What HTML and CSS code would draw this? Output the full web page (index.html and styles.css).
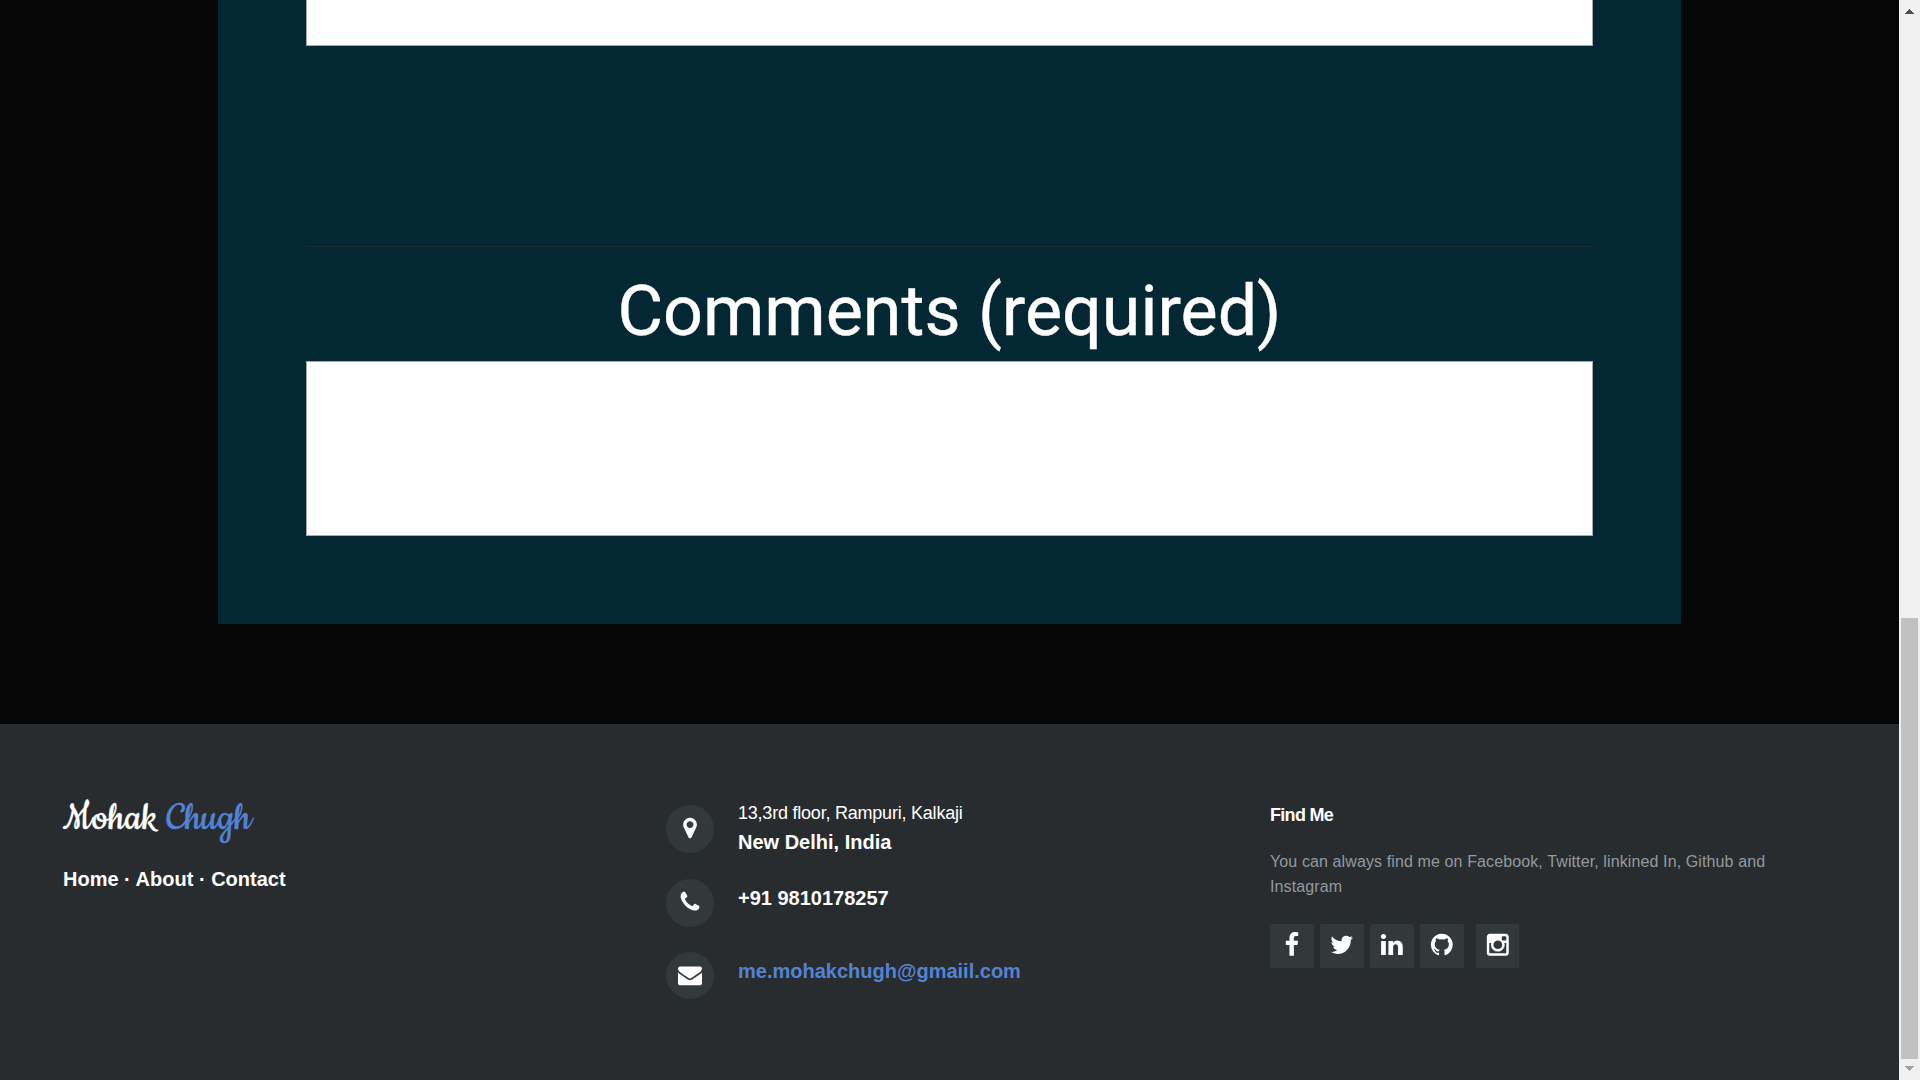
FILE: index.html
```html
<!DOCTYPE html>
<html lang="en">
<head>
<meta charset="utf-8">
<title>Mohak Chugh</title>
<link rel="stylesheet" href="styles.css">
</head>
<body>
<div class="page">
  <main class="content">
    <form class="panel">
      <div class="field field-first"></div>
      <hr class="divider">
      <label class="label">Comments (required)</label>
      <div class="field field-comments"></div>
    </form>
  </main>
  <footer class="footer">
    <section class="brand">
      <h3 class="logo">Mohak <span>Chugh</span></h3>
      <p class="links">Home · About · Contact</p>
    </section>
    <section class="contacts">
      <div class="contact">
        <i class="circle"><svg class="glyph" viewBox="0 0 1792 1792"><path d="M1152 640q0-106-75-181t-181-75-181 75-75 181 75 181 181 75 181-75 75-181zm256 0q0 109-33 179l-364 774q-16 33-47.5 52t-67.5 19-67.5-19-46.5-52l-365-774q-33-70-33-179 0-212 150-362t362-150 362 150 150 362z"/></svg></i>
        <p class="address"><span>13,3rd floor, Rampuri, Kalkaji</span>New Delhi, India</p>
      </div>
      <div class="contact">
        <i class="circle"><svg class="glyph" viewBox="0 0 1792 1792"><path d="M1600 1240q0 27-10 70.5t-21 68.5q-21 50-122 106-94 51-186 51-27 0-53-3.5t-57.5-12.5-47-14.5-55.5-20.5-49-18q-98-35-175-83-127-79-264-216t-216-264q-48-77-83-175-3-9-18-49t-20.5-55.5-14.5-47-12.5-57.5-3.5-53q0-92 51-186 56-101 106-122 25-11 68.5-21t70.5-10q14 0 21 3 18 6 53 76 11 19 30 54t35 63.5 31 53.5q3 4 17.5 25t21.5 35.5 7 28.5q0 20-28.5 50t-62 55-62 53-28.5 46q0 9 5 22.5t8.5 20.5 14 24 11.5 19q76 137 174 235t235 174q2 1 19 11.5t24 14 20.5 8.5 22.5 5q18 0 46-28.5t53-62 55-62 50-28.5q14 0 28.5 7t35.5 21.5 25 17.5q25 15 53.5 31t63.5 35 54 30q70 35 76 53 3 7 3 21z"/></svg></i>
        <p class="phone">+91 9810178257</p>
      </div>
      <div class="contact">
        <i class="circle circle-mail"><svg class="glyph" viewBox="0 0 1792 1792"><path d="M1792 710v794q0 66-47 113t-113 47h-1472q-66 0-113-47t-47-113v-794q44 49 101 87 362 246 497 345 57 42 92.5 65.5t94.5 48 110 24.5h2q51 0 110-24.5t94.5-48 92.5-65.5q170-123 498-345 57-39 100-87zm0-294q0 79-49 151t-122 123q-376 261-468 325-10 7-42.5 31t-54 38.5-52 32.5-57.5 27-50 9h-2q-23 0-50-9t-57.5-27-52-32.5-54-38.5-42.5-31q-91-64-262-182.5t-205-142.5q-62-42-117-115.5t-55-136.5q0-78 41.5-130t118.5-52h1472q65 0 112.5 47t47.5 113z"/></svg></i>
        <p class="mail">me.mohakchugh@gmaiil.com</p>
      </div>
    </section>
    <section class="find">
      <h4 class="find-title">Find Me</h4>
      <p class="find-text">You can always find me on Facebook, Twitter, linkined In, Github and Instagram</p>
      <div class="socials">
        <a class="social"><svg class="glyph" viewBox="0 0 1792 1792"><path d="M1343 12v264h-157q-86 0-116 36t-30 108v189h293l-39 296h-254v759h-306v-759h-255v-296h255v-218q0-186 104-288.5t277-102.5q147 0 228 12z"/></svg></a>
        <a class="social"><svg class="glyph" viewBox="0 0 1792 1792"><path d="M1684 408q-67 98-162 167 1 14 1 42 0 130-38 259.5t-115.5 248.5-184.5 210.5-258 146-323 54.5q-271 0-496-145 35 4 78 4 225 0 401-138-105-2-188-64.5t-114-159.5q33 5 61 5 43 0 85-11-112-23-185.5-111.5t-73.5-205.5v-4q68 38 146 41-66-44-105-115t-39-154q0-88 44-163 121 149 294.5 238.5t371.5 99.5q-8-38-8-74 0-134 94.5-228.5t228.5-94.5q140 0 236 102 109-21 205-78-37 115-142 178 93-10 186-50z"/></svg></a>
        <a class="social"><svg class="glyph" viewBox="0 0 1792 1792"><path d="M477 625v991h-330v-991h330zm21-306q1 73-50.5 122t-135.5 49h-2q-82 0-132-49t-50-122q0-74 51.5-122.5t134.5-48.5 133 48.5 51 122.5zm1166 729v568h-329v-530q0-105-40.5-164.5t-126.5-59.5q-63 0-105.5 34.5t-63.5 85.5q-11 30-11 81v553h-329q2-399 2-647t-1-296l-1-48h329v144h-2q20-32 41-56t56.5-52 87-43.5 114.5-15.5q171 0 275 113.5t104 332.5z"/></svg></a>
        <a class="social"><svg class="glyph" viewBox="0 0 1792 1792"><path d="M896 128q209 0 385.5 103t279.5 279.5 103 385.5q0 251-146.5 451.5t-378.5 277.5q-27 5-40-7t-13-30q0-3 .5-76.5t.5-134.5q0-97-52-142 57-6 102.5-18t94-39 81-66.5 53-105 20.5-150.5q0-119-79-206 37-91-8-204-28-9-81 11t-92 44l-38 24q-93-26-192-26t-192 26q-16-11-42.5-27t-83.5-38.5-85-13.5q-45 113-8 204-79 87-79 206 0 85 20.5 150t52.5 105 80.5 67 94 39 102.5 18q-39 36-49 103-21 10-45 15t-57 5-65.5-21.5-55.5-62.5q-19-32-48.5-52t-49.5-24l-20-3q-21 0-29 4.5t-5 11.5 9 14 13 12l7 5q22 10 43.5 38t31.5 51l10 23q13 38 44 61.5t67 30 69.5 7 55.5-3.5l23-4q0 38 .5 88.5t.5 54.5q0 18-13 30t-40 7q-232-77-378.5-277.5t-146.5-451.5q0-209 103-385.5t279.5-279.5 385.5-103z"/></svg></a>
        <a class="social social-last"><svg class="glyph" viewBox="0 0 1792 1792"><path d="M1490 1426v-648h-135q20 63 20 131 0 126-64 232.5t-174 168.5-240 62q-197 0-337-135.5t-140-327.5q0-68 20-131h-141v648q0 26 17.5 43.5t43.5 17.5h1069q25 0 43-17.5t18-43.5zm-284-533q0-124-90.5-211.5t-218.5-87.5q-127 0-217.5 87.5t-90.5 211.5 90.5 211.5 217.5 87.5q128 0 218.5-87.5t90.5-211.5zm284-360v-165q0-28-20-48.5t-49-20.5h-174q-29 0-49 20.5t-20 48.5v165q0 29 20 49t49 20h174q29 0 49-20t20-49zm174-208v1142q0 81-58 139t-139 58h-1142q-81 0-139-58t-58-139v-1142q0-81 58-139t139-58h1142q81 0 139 58t58 139z"/></svg></a>
      </div>
    </section>
  </footer>
</div>
<aside class="scrollbar">
  <svg class="arrow" viewBox="0 0 9 5"><path d="M4 0h1v1h1v1h1v1h1v1h1v1H0V4h1V3h1V2h1V1h1z"/></svg>
  <div class="thumb"></div>
  <svg class="arrow arrow-down" viewBox="0 0 9 5"><path d="M0 0h9v1H8v1H7v1H6v1H5v1H4V4H3V3H2V2H1V1H0z"/></svg>
</aside>
</body>
</html>
```
FILE: styles.css
```css
* { box-sizing: border-box; }
body {
  margin: 0;
  height: 1080px;
  display: flex;
  overflow: hidden;
  background: #060606;
  color: #fff;
  font-family: "Liberation Sans", Arial, sans-serif;
}
h3, h4, p, hr { margin: 0; }
.page { width: 1899px; display: flex; flex-direction: column; }
.content { height: 724px; padding: 0 218px; }
.panel {
  height: 624px;
  padding: 0 88px;
  background: #042833;
  display: flex;
  flex-direction: column;
}
.field { background: #fff; border: 1px solid #a9a9a9; }
.field-first { height: 46px; border-top: 0; }
.field-comments { height: 175px; }
.divider { margin-top: 200px; height: 1px; border: 0; background: #222a31; }
.label {
  height: 114px;
  padding-top: 22px;
  font: 400 70px/84px Roboto, sans-serif;
  text-align: center;
  -webkit-text-stroke: 0.4px #fff;
}
.footer {
  flex: 1;
  background: #292c2f;
  display: grid;
  grid-template-columns: 603px 604px 1fr;
  padding: 70px 63px 0;
}
.logo {
  height: 60px;
  padding-top: 1px;
  font: 400 44.8px/48px Cookie, "Liberation Serif", cursive;
  white-space: nowrap;
  -webkit-text-stroke: 0.3px currentColor;
}
.logo span { color: #5383d3; }
.links { padding-top: 14px; font: 700 20px/23px "Liberation Sans", sans-serif; }
.contacts { padding-top: 11px; display: flex; flex-direction: column; }
.contact { height: 74px; display: flex; gap: 24px; font-weight: 700; font-size: 20px; }
.contact + .contact + .contact { height: 73px; margin-top: -1px; }
.circle {
  width: 48px;
  height: 48px;
  border-radius: 50%;
  background: #33383b;
  display: flex;
  align-items: center;
  justify-content: center;
  padding-bottom: 2px;
}
.circle-mail { height: 47px; }
.glyph { width: 24px; height: 24px; fill: #fff; display: block; }
.address { margin-top: -6px; line-height: 29px; }
.address span { display: block; font-weight: 400; font-size: 18px; letter-spacing: -0.22px; }
.phone { padding-top: 8px; line-height: 23px; }
.mail { padding-top: 8px; line-height: 23px; color: #5383d3; }
.find-title { padding-top: 11px; font-size: 18px; line-height: 21px; letter-spacing: -0.7px; }
.find-text { width: 510px; margin-top: 23px; color: #92999f; font-size: 16px; line-height: 25px; letter-spacing: 0.115px; }
.socials { display: flex; gap: 6px; margin-top: 25px; }
.social {
  width: 44px;
  height: 44px;
  border-radius: 2px;
  background: #33383b;
  display: flex;
  align-items: center;
  justify-content: center;
  padding-bottom: 2px;
}
.social .glyph { width: 25.6px; height: 25.6px; }
.social-last { width: 43px; margin-left: 6px; }
.scrollbar {
  width: 21px;
  background: #f1f1f1;
  padding-top: 9px;
  display: flex;
  flex-direction: column;
  align-items: center;
}
.arrow { width: 9px; height: 5px; fill: #505050; }
.thumb { width: 17px; height: 441px; margin-top: 604px; background: #c1c1c1; }
.arrow-down { margin-top: 7px; fill: #a3a3a3; }
```
